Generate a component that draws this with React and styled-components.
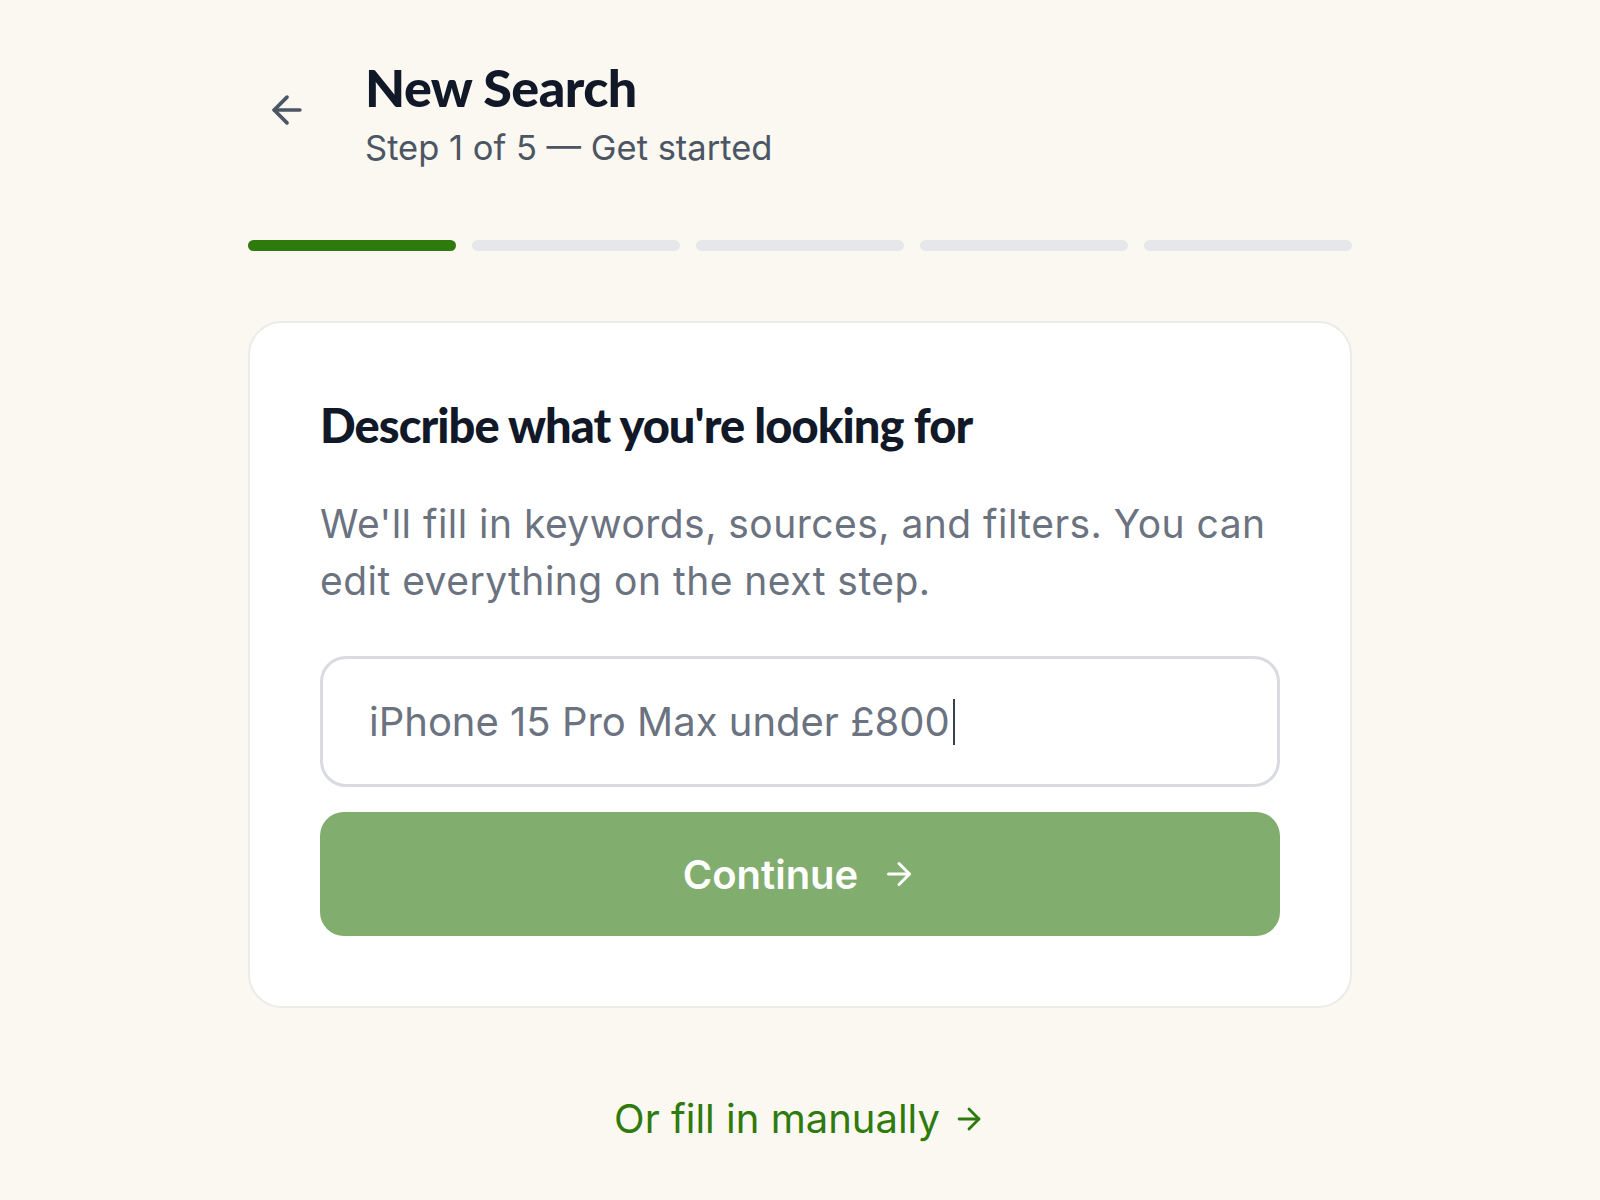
import React, { useState } from "react";
import styled, { createGlobalStyle } from "styled-components";
import { ArrowLeft, ArrowRight } from "lucide-react";

const GlobalStyle = createGlobalStyle`
  * { box-sizing: border-box; }
  body {
    margin: 0;
    background: #faf8f0;
    font-family: Inter, "Noto Sans", sans-serif;
    -webkit-font-smoothing: antialiased;
  }
`;

const Page = styled.div`
  width: 1104px;
  margin: 0 auto;
  padding-top: 56px;
  padding-bottom: 60px;
`;

const Header = styled.div`
  display: flex;
  align-items: flex-start;
  padding-left: 16px;
`;

const BackButton = styled.button`
  display: flex;
  align-items: center;
  justify-content: center;
  width: 46px;
  height: 46px;
  margin-top: 31px;
  padding: 0;
  border: none;
  background: none;
  color: #4b5563;
  cursor: pointer;
`;

const TitleBlock = styled.div`
  margin-left: 55px;
`;

const Title = styled.h1`
  margin: 0;
  font-family: Lato, "Noto Sans", sans-serif;
  font-weight: 900;
  font-size: 52px;
  line-height: 62px;
  letter-spacing: -0.01em;
  color: #111827;
`;

const Subtitle = styled.div`
  margin-top: 8px;
  font-size: 34.5px;
  line-height: 44px;
  color: #4b5563;
`;

const Progress = styled.div`
  display: grid;
  grid-template-columns: repeat(5, 1fr);
  gap: 16px;
  margin-top: 70px;
`;

const Segment = styled.div`
  height: 11px;
  border-radius: 6px;
  background: ${(p) => (p.active ? "#2e7a0c" : "#e5e7eb")};
`;

const Card = styled.div`
  margin-top: 70px;
  background: #ffffff;
  border: 2px solid #ebebe8;
  border-radius: 34px;
  padding: 74px 70px 70px;
`;

const Heading = styled.h2`
  margin: 0;
  font-family: Lato, "Noto Sans", sans-serif;
  font-weight: 900;
  font-size: 47px;
  line-height: 56px;
  letter-spacing: -0.02em;
  color: #111827;
`;

const Description = styled.p`
  margin: 42px 0 0;
  font-size: 39px;
  line-height: 57px;
  letter-spacing: 0.012em;
  color: #6b7280;
`;

const Field = styled.label`
  display: flex;
  align-items: center;
  height: 131px;
  margin-top: 47px;
  padding: 0 46px;
  border: 3px solid #d9dbe0;
  border-radius: 26px;
  background: #ffffff;
  cursor: text;
`;

const FieldInput = styled.input`
  field-sizing: content;
  min-width: 0;
  max-width: 100%;
  padding: 0;
  border: none;
  background: transparent;
  font-family: Inter, "Noto Sans", sans-serif;
  font-size: 40px;
  color: #6b7280;
  caret-color: transparent;
  outline: none;
`;

const Caret = styled.span`
  width: 2px;
  height: 46px;
  margin-left: 3px;
  background: #374151;
`;

const ContinueButton = styled.button`
  display: flex;
  align-items: center;
  justify-content: center;
  gap: 23px;
  width: 100%;
  height: 124px;
  margin-top: 25px;
  border: none;
  border-radius: 24px;
  background: #81ad6e;
  color: #ffffff;
  font-family: Inter, "Noto Sans", sans-serif;
  font-weight: 600;
  font-size: 40px;
  cursor: pointer;
`;

const ManualLink = styled.a`
  display: flex;
  align-items: center;
  justify-content: center;
  gap: 12px;
  margin-top: 86px;
  font-size: 40px;
  color: #2e7a0c;
  text-decoration: none;
  cursor: pointer;
`;

export default function App() {
  const [query, setQuery] = useState("iPhone 15 Pro Max under £800");
  const step = 1;

  return (
    <>
      <GlobalStyle />
      <Page>
        <Header>
          <BackButton aria-label="Back">
            <ArrowLeft size={44} strokeWidth={2} />
          </BackButton>
          <TitleBlock>
            <Title>New Search</Title>
            <Subtitle>Step 1 of 5 — Get started</Subtitle>
          </TitleBlock>
        </Header>

        <Progress>
          {[1, 2, 3, 4, 5].map((n) => (
            <Segment key={n} active={n <= step} />
          ))}
        </Progress>

        <Card>
          <Heading>Describe what you're looking for</Heading>
          <Description>
            We'll fill in keywords, sources, and filters. You can edit everything on the next step.
          </Description>
          <Field>
            <FieldInput value={query} onChange={(e) => setQuery(e.target.value)} />
            <Caret />
          </Field>
          <ContinueButton>
            Continue
            <ArrowRight size={36} strokeWidth={2} />
          </ContinueButton>
        </Card>

        <ManualLink>
          Or fill in manually
          <ArrowRight size={34} strokeWidth={2} />
        </ManualLink>
      </Page>
    </>
  );
}
